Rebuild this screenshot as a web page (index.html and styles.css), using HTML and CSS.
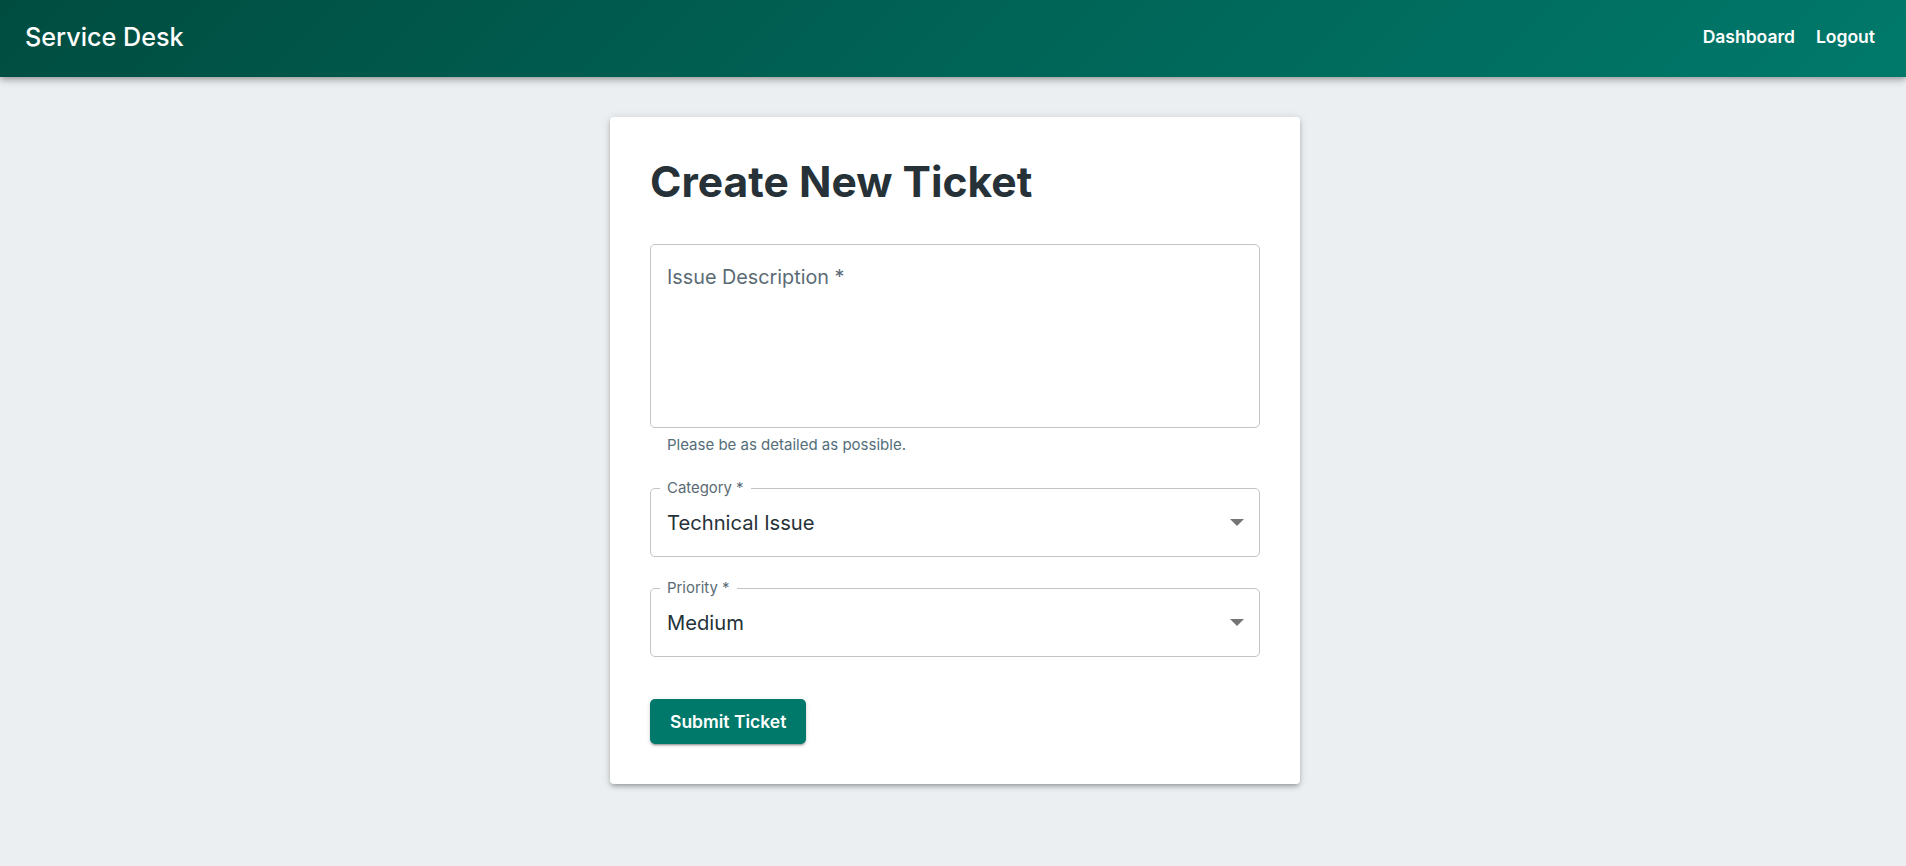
FILE: index.html
```html
<!DOCTYPE html>
<html lang="en">
<head>
<meta charset="utf-8">
<title>Service Desk</title>
<link rel="stylesheet" href="styles.css">
</head>
<body>
<header class="appbar">
  <div class="brand">Service Desk</div>
  <nav class="nav">
    <a class="nav-link" href="#">Dashboard</a>
    <a class="nav-link" href="#">Logout</a>
  </nav>
</header>
<main class="page">
  <section class="card">
    <h1 class="title">Create New Ticket</h1>
    <div class="textarea-box">
      <span class="inner-label">Issue Description *</span>
    </div>
    <p class="helper">Please be as detailed as possible.</p>
    <div class="select-box">
      <span class="float-label">Category *</span>
      <span class="value">Technical Issue</span>
      <svg class="arrow" width="14" height="7" viewBox="0 0 14 7"><polygon points="0,0 14,0 7,7" fill="#757575"/></svg>
    </div>
    <div class="select-box select-gap">
      <span class="float-label">Priority *</span>
      <span class="value">Medium</span>
      <svg class="arrow" width="14" height="7" viewBox="0 0 14 7"><polygon points="0,0 14,0 7,7" fill="#757575"/></svg>
    </div>
    <button class="submit" type="button">Submit Ticket</button>
  </section>
</main>
</body>
</html>
```

FILE: styles.css
```css
html, body {
  margin: 0;
  padding: 0;
}
body {
  background: #eceff1;
  font-family: Inter, "Noto Sans", sans-serif;
  min-height: 866px;
}
.appbar {
  position: relative;
  z-index: 1;
  height: 77px;
  box-sizing: border-box;
  display: flex;
  align-items: center;
  justify-content: space-between;
  padding: 0 31px 4px 25px;
  background: linear-gradient(135deg, #004d40 0%, #00796b 100%);
  box-shadow: 0 2px 5px -1px rgba(0,0,0,0.2), 0 4px 6px 0 rgba(0,0,0,0.14), 0 1px 12px 0 rgba(0,0,0,0.12);
}
.brand {
  color: #fff;
  font-size: 25.2px;
  font-weight: 500;
}
.nav {
  display: flex;
  gap: 21px;
}
.nav-link {
  color: #fff;
  text-decoration: none;
  font-size: 17.5px;
  font-weight: 600;
}
.page {
  display: flex;
  justify-content: center;
  padding: 40px 0 0 4px;
}
.card {
  width: 690px;
  box-sizing: border-box;
  padding: 40px;
  background: #fff;
  border-radius: 4px;
  box-shadow: 0 3px 4px -2px rgba(0,0,0,0.2), 0 3px 5px 0 rgba(0,0,0,0.14), 0 1px 10px 0 rgba(0,0,0,0.12);
}
.title {
  margin: 0 0 36px;
  font-size: 42.6px;
  font-weight: 700;
  line-height: 50.8px;
  color: #263238;
}
.textarea-box {
  height: 184px;
  box-sizing: border-box;
  border: 1px solid #c4c4c4;
  border-radius: 5px;
  padding: 21px 16px;
}
.inner-label {
  display: block;
  font-size: 19.8px;
  line-height: 23px;
  color: #5b6b75;
}
.helper {
  margin: 5px 0 0 17px;
  font-size: 15px;
  line-height: 24px;
  color: #546e7a;
}
.select-box {
  position: relative;
  margin-top: 31px;
  height: 69px;
  box-sizing: border-box;
  border: 1px solid #c4c4c4;
  border-radius: 5px;
  padding: 0 15px 0 16px;
  display: flex;
  align-items: center;
}
.float-label {
  position: absolute;
  top: -9px;
  left: 9px;
  padding: 0 7px;
  background: #fff;
  font-size: 14.9px;
  line-height: 17px;
  color: #5b6b75;
}
.value {
  font-size: 20.2px;
  color: #263238;
}
.arrow {
  margin-left: auto;
  display: block;
}
.submit {
  display: block;
  margin-top: 42px;
  height: 45px;
  padding: 0 20px;
  border: none;
  border-radius: 5px;
  background: #00796b;
  color: #fff;
  font-family: Inter, "Noto Sans", sans-serif;
  font-size: 17.5px;
  font-weight: 600;
  box-shadow: 0 3px 1px -2px rgba(0,0,0,0.2), 0 2px 2px 0 rgba(0,0,0,0.14), 0 1px 5px 0 rgba(0,0,0,0.12);
  cursor: pointer;
}
```
